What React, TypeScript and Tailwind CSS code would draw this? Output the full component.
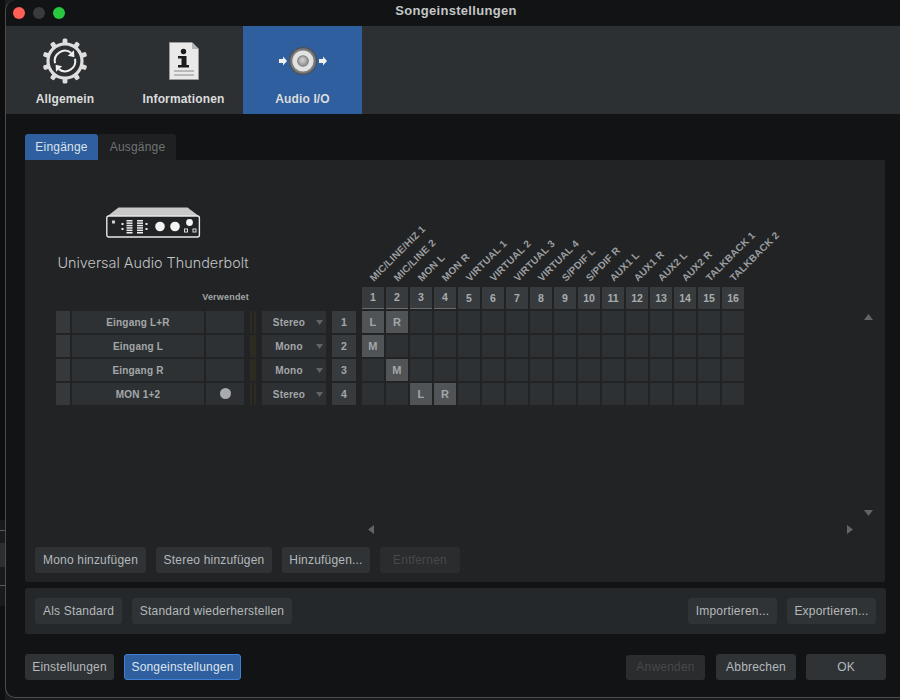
import React from "react";

const labels = ["MIC/LINE/HIZ 1","MIC/LINE 2","MON L","MON R","VIRTUAL 1","VIRTUAL 2","VIRTUAL 3","VIRTUAL 4","S/PDIF L","S/PDIF R","AUX1 L","AUX1 R","AUX2 L","AUX2 R","TALKBACK 1","TALKBACK 2"];
const cols = Array.from({ length: 16 }, (_, i) => i);
const rows = [
  { name: "Eingang L+R", type: "Stereo", n: 1, used: false, map: { 0: "L", 1: "R" } as Record<number, string> },
  { name: "Eingang L", type: "Mono", n: 2, used: false, map: { 0: "M" } as Record<number, string> },
  { name: "Eingang R", type: "Mono", n: 3, used: false, map: { 1: "M" } as Record<number, string> },
  { name: "MON 1+2", type: "Stereo", n: 4, used: true, map: { 2: "L", 3: "R" } as Record<number, string> },
];

function Btn({ w, children, disabled, primary, h }: { w: string; children: React.ReactNode; disabled?: boolean; primary?: boolean; h?: string }) {
  const tone = primary
    ? "bg-[#2f5f9e] border border-[#3f80d6] text-[#dde4ee]"
    : disabled
    ? "bg-[#2a2c2e] text-[#47494b]"
    : "bg-[#2f3336] text-[#b5b9bb]";
  return (
    <div className={`${w} ${h ?? "h-[26px]"} ${tone} shrink-0 rounded-[3px] flex items-center justify-center text-[12px] tracking-[0.2px]`}>
      {children}
    </div>
  );
}

function Gear() {
  const teeth = Array.from({ length: 10 }, (_, i) => i * 36);
  return (
    <svg width="48" height="48" viewBox="0 0 48 48">
      {teeth.map((a) => (
        <rect key={a} x="21.6" y="1.4" width="4.8" height="6.5" rx="1.5" fill="#dedede" transform={`rotate(${a} 24 24)`} />
      ))}
      <circle cx="24" cy="24" r="17" fill="none" stroke="#dedede" strokeWidth="3.2" />
      <path d="M14 26.2 A10.2 10.2 0 0 1 30.2 15.9" fill="none" stroke="#efefef" strokeWidth="2" />
      <path d="M33 13.2 L33.4 20.2 L26.8 18.8 Z" fill="#efefef" />
      <path d="M34 21.8 A10.2 10.2 0 0 1 17.8 32.1" fill="none" stroke="#efefef" strokeWidth="2" />
      <path d="M15 34.8 L14.6 27.8 L21.2 29.2 Z" fill="#efefef" />
    </svg>
  );
}

function Doc() {
  return (
    <svg width="30" height="38" viewBox="0 0 30 38">
      <path d="M0.5 0.5 H23 L29.5 7 V37.5 H0.5 Z" fill="#e9e9e9" stroke="#9a9a9a" />
      <path d="M23 0.5 V7 H29.5 Z" fill="#b5b5b5" />
      <circle cx="14.5" cy="9.5" r="2.7" fill="#1c1c1c" />
      <path d="M9 14 H17.5 V23 H20 V25.5 H9 V23 H12.5 V16.5 H9 Z" fill="#1c1c1c" />
      <rect x="5" y="28.5" width="20" height="1" fill="#8a8a8a" />
      <rect x="5" y="32.5" width="20" height="1" fill="#8a8a8a" />
    </svg>
  );
}

function Speaker() {
  return (
    <svg width="50" height="30" viewBox="0 0 50 30">
      <defs>
        <radialGradient id="ball" cx="45%" cy="40%" r="65%">
          <stop offset="0%" stopColor="#d4d4d4" />
          <stop offset="100%" stopColor="#8c8c8c" />
        </radialGradient>
      </defs>
      <path d="M1 13 H5 V10.5 L9 15 L5 19.5 V17 H1 Z" fill="#f2f2f2" />
      <circle cx="25" cy="15" r="14" fill="#4f5154" />
      <circle cx="25" cy="15" r="12.8" fill="#77797b" />
      <circle cx="25" cy="15" r="10.6" fill="#e2e2e2" />
      <circle cx="25" cy="15" r="5.8" fill="#77797b" />
      <circle cx="25" cy="15" r="4.8" fill="url(#ball)" />
      <path d="M41 13 H45 V10.5 L49 15 L45 19.5 V17 H41 Z" fill="#f2f2f2" />
    </svg>
  );
}

function Device() {
  return (
    <svg width="95" height="31" viewBox="0 0 95 31">
      <path d="M1 9.5 L12.5 0.5 H81.5 L93.5 9.5 Z" fill="#c9c9c9" />
      <rect x="0.8" y="9" width="92.6" height="21" rx="2" fill="#212325" stroke="#e8e8e8" strokeWidth="1.4" />
      <rect x="6" y="13.5" width="3" height="3" fill="#cfcfcf" />
      <rect x="15.5" y="16" width="2" height="2" fill="#eee" />
      <rect x="15.5" y="21" width="2" height="2" fill="#eee" />
      {[13, 15.4, 17.8, 20.2, 22.6, 25].map((y) => (
        <React.Fragment key={y}>
          <rect x="20.5" y={y} width="6" height="1.5" fill="#eee" />
          <rect x="31" y={y} width="6" height="1.5" fill="#eee" />
        </React.Fragment>
      ))}
      <rect x="39.5" y="16" width="2" height="2" fill="#eee" />
      <rect x="39.5" y="21" width="2" height="2" fill="#eee" />
      <circle cx="54" cy="19.5" r="4.8" fill="#f4f4f4" />
      <circle cx="69" cy="19.5" r="4.8" fill="#f4f4f4" />
      <circle cx="83.5" cy="15.5" r="3.4" fill="#f4f4f4" />
      <rect x="78.5" y="22" width="3" height="3" fill="none" stroke="#ddd" />
      <rect x="87" y="22" width="3" height="3" fill="none" stroke="#ddd" />
    </svg>
  );
}

function Tri({ dir, cls }: { dir: "up" | "down" | "left" | "right"; cls: string }) {
  const d = { up: "M0 6 L4.5 0 L9 6 Z", down: "M0 0 L9 0 L4.5 6 Z", left: "M6 0 V9 L0 4.5 Z", right: "M0 0 V9 L6 4.5 Z" }[dir];
  const size = dir === "up" || dir === "down" ? { w: 9, h: 6 } : { w: 6, h: 9 };
  return (
    <svg className={cls} width={size.w} height={size.h} viewBox={`0 0 ${size.w} ${size.h}`}>
      <path d={d} fill="#626567" />
    </svg>
  );
}

function ToolTab({ label, active, icon, w }: { label: string; active?: boolean; icon: React.ReactNode; w: string }) {
  return (
    <div className={`${w} h-[88px] flex flex-col items-center ${active ? "bg-[#2f5f9e]" : ""}`}>
      <div className="h-[66px] pt-[3px] flex items-center justify-center">{icon}</div>
      <div className="text-[12px] font-bold tracking-[0.15px] text-[#dcdcdc] leading-[14px]">{label}</div>
    </div>
  );
}

export default function App() {
  return (
    <div className="w-[900px] h-[700px] overflow-hidden flex bg-[#1b1c1d] font-['Liberation_Sans',Arial,sans-serif]">
      <div className="w-[5px] shrink-0 flex flex-col">
        <div className="h-[520px] bg-[#0e0e0e]" />
        <div className="h-[10px] bg-[#1a1a1a]" />
        <div className="h-[1px] bg-[#5a5a5a]" />
        <div className="h-[12px] bg-[#1a1a1a]" />
        <div className="h-[24px] bg-[#2c2e30]" />
        <div className="h-[18px] bg-[#1a1a1a]" />
        <div className="h-[1px] bg-[#5a5a5a]" />
        <div className="h-[20px] bg-[#1a1a1a]" />
        <div className="flex-1 bg-[#101010]" />
      </div>
      <div className="w-[901px] shrink-0 h-[698px] bg-[#111314] border-l border-b border-t-0 border-[#4b4d4f] rounded-l-[10px] flex flex-col overflow-hidden">
        {/* Title bar */}
        <div className="h-[26px] shrink-0 grid grid-cols-[1fr_auto_1fr] items-center">
          <div className="flex items-center gap-[8px] pl-[7px]">
            <div className="w-[12px] h-[12px] rounded-full bg-[#ff5f57]" />
            <div className="w-[12px] h-[12px] rounded-full bg-[#393b3c]" />
            <div className="w-[12px] h-[12px] rounded-full bg-[#28c840]" />
          </div>
          <div className="text-[13px] font-bold tracking-[0.3px] text-[#c4c6c7] -translate-y-[2px]">Songeinstellungen</div>
          <div />
        </div>

        {/* Toolbar */}
        <div className="h-[88px] shrink-0 bg-[#2c3033] flex">
          <ToolTab w="w-[118px]" label="Allgemein" icon={<Gear />} />
          <ToolTab w="w-[119px]" label="Informationen" icon={<Doc />} />
          <ToolTab w="w-[119px]" label="Audio I/O" active icon={<Speaker />} />
        </div>

        {/* Content */}
        <div className="flex-1 flex flex-col pl-[19px] pr-[15px] pt-[20px]">
          <div className="flex h-[26px] text-[12px] tracking-[0.2px]">
            <div className="w-[73px] bg-[#2f5f9e] text-[#dce3ec] rounded-t-[3px] flex items-center justify-center">Eingänge</div>
            <div className="w-[78px] pl-[1px] bg-[#1e2022] text-[#707375] rounded-t-[3px] flex items-center justify-center">Ausgänge</div>
          </div>

          {/* Main panel */}
          <div className="relative w-[860px] h-[422px] bg-[#212325] rounded-b-[2px] flex flex-col">
            <div className="flex h-[127px]">
              <div className="ml-[31px] w-[194px] flex flex-col items-center pt-[47px]">
                <Device />
                <div className="mt-[16px] text-[14.4px] leading-[18px] font-['Inter','Liberation_Sans',sans-serif] font-light text-[#c2c4c6] whitespace-nowrap">
                  Universal Audio Thunderbolt
                </div>
              </div>
              <div className="ml-[112px] flex gap-[2px] items-end">
                {labels.map((l) => (
                  <div key={l} className="w-[22px] shrink-0 pl-[14px] pb-[3px]">
                    <div className="w-0 origin-bottom-left -rotate-45 whitespace-nowrap text-[10px] leading-[12px] tracking-[0.2px] font-bold text-[#9b9ea0]">
                      {l}
                    </div>
                  </div>
                ))}
              </div>
            </div>

            {/* Numbers header */}
            <div className="flex h-[22px] mb-[2px]">
              <div className="ml-[31px] w-[194px] pr-[1px] flex items-center justify-end text-[9px] font-bold tracking-[0.2px] text-[#a2a5a7]">Verwendet</div>
              <div className="ml-[112px] flex gap-[2px]">
                {cols.map((c) => (
                  <div
                    key={c}
                    className={`w-[22px] h-[22px] pt-[1px] bg-[#373b3d] flex items-center justify-center text-[10.5px] font-bold text-[#a9acae] ${c < 4 ? "border-b border-[#6a6d6f]" : ""}`}
                  >
                    {c + 1}
                  </div>
                ))}
              </div>
            </div>

            {/* Rows */}
            <div className="flex flex-col gap-[2px] ml-[31px]">
              {rows.map((r) => (
                <div key={r.n} className="flex h-[22px] text-[10px] tracking-[0.2px] font-bold text-[#a4a7a9]">
                  <div className="w-[14px] bg-[#36393b]" />
                  <div className="ml-[2px] w-[132px] pt-[1px] bg-[#2e3133] flex items-center justify-center">{r.name}</div>
                  <div className="ml-[2px] w-[38px] bg-[#2e3133] flex items-center justify-center">
                    {r.used && <div className="w-[11px] h-[11px] rounded-full bg-[#a9abad] -mt-[1px]" />}
                  </div>
                  <div className="ml-[6px] w-[6px] flex justify-between">
                    {r.type === "Stereo" ? (
                      <>
                        <div className="w-[2px] bg-[#2e2b23]" />
                        <div className="w-[2px] bg-[#2e2b23]" />
                      </>
                    ) : (
                      <div className="w-[6px] bg-[#2e2b23]" />
                    )}
                  </div>
                  <div className="ml-[6px] w-[64px] pt-[1px] bg-[#2e3133] flex items-center">
                    <div className="w-[54px] text-center">{r.type}</div>
                    <svg width="7" height="5" viewBox="0 0 7 5"><path d="M0 0 H7 L3.5 5 Z" fill="#626567" /></svg>
                  </div>
                  <div className="ml-[6px] w-[24px] pt-[1px] text-[10.5px] bg-[#373b3d] flex items-center justify-center">{r.n}</div>
                  <div className="ml-[6px] flex gap-[2px]">
                    {cols.map((c) => (
                      <div
                        key={c}
                        className={`w-[22px] h-[22px] flex items-center justify-center text-[11px] ${r.map[c] ? "bg-[#505457]" : "bg-[#2e3133]"}`}
                      >
                        {r.map[c] ?? ""}
                      </div>
                    ))}
                  </div>
                </div>
              ))}
            </div>

            <Tri dir="up" cls="absolute left-[839px] top-[154px]" />
            <Tri dir="down" cls="absolute left-[839px] top-[350px]" />
            <Tri dir="left" cls="absolute left-[343px] top-[365px]" />
            <Tri dir="right" cls="absolute left-[822px] top-[365px]" />

            <div className="mt-auto mb-[9px] ml-[10px] flex gap-[10px]">
              <Btn w="w-[111px]">Mono hinzufügen</Btn>
              <Btn w="w-[116px]">Stereo hinzufügen</Btn>
              <Btn w="w-[88px]">Hinzufügen...</Btn>
              <Btn w="w-[80px]" disabled>Entfernen</Btn>
            </div>
          </div>

          {/* Defaults panel */}
          <div className="mt-[6px] w-[861px] h-[46px] bg-[#25282a] rounded-[3px] flex items-center px-[10px] gap-[10px]">
            <Btn w="w-[87px]">Als Standard</Btn>
            <Btn w="w-[160px]">Standard wiederherstellen</Btn>
            <div className="flex-1" />
            <Btn w="w-[89px]">Importieren...</Btn>
            <Btn w="w-[89px]">Exportieren...</Btn>
          </div>

          {/* Footer */}
          <div className="mt-[20px] w-[861px] flex items-center gap-[10px]">
            <Btn w="w-[89px]">Einstellungen</Btn>
            <Btn w="w-[117px]" primary>Songeinstellungen</Btn>
            <div className="flex-1" />
            <Btn w="w-[79px]" h="h-[25px]" disabled>Anwenden</Btn>
            <div className="ml-[1px]"><Btn w="w-[80px]">Abbrechen</Btn></div>
            <Btn w="w-[80px]">OK</Btn>
          </div>
        </div>
      </div>
    </div>
  );
}
